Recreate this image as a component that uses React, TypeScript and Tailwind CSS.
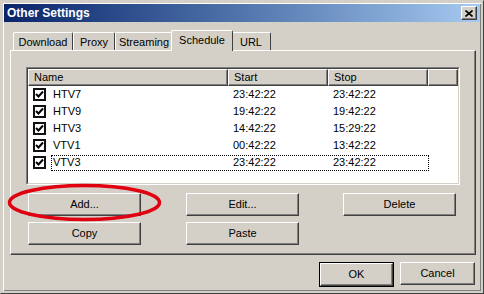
import React from 'react';

const rows = [
  { name: 'HTV7', start: '23:42:22', stop: '23:42:22' },
  { name: 'HTV9', start: '19:42:22', stop: '19:42:22' },
  { name: 'HTV3', start: '14:42:22', stop: '15:29:22' },
  { name: 'VTV1', start: '00:42:22', stop: '13:42:22' },
  { name: 'VTV3', start: '23:42:22', stop: '23:42:22' },
];

const raised =
  'border border-t-white border-l-white border-r-[#404040] border-b-[#404040] shadow-[inset_-1px_-1px_0_#808080]';

function Button({ label, className = '' }: { label: string; className?: string }) {
  return (
    <div className={`flex h-[23px] items-center justify-center bg-[#d4d0c8] ${raised} ${className}`}>
      {label}
    </div>
  );
}

function CheckBox() {
  return (
    <div className="flex h-[13px] w-[13px] items-center justify-center border-2 border-[#111] bg-white">
      <svg width="9" height="9" viewBox="0 0 9 9">
        <path d="M1 4 L3.5 6.5 L8 1.5" stroke="#000" strokeWidth="2" fill="none" />
      </svg>
    </div>
  );
}

function Tab({ label, w, active }: { label: string; w: number; active?: boolean }) {
  return (
    <div
      style={{ width: w }}
      className={`flex items-center justify-center rounded-t-[2px] border-t border-l border-r border-t-white border-l-white border-r-[#404040] bg-[#d4d0c8] ${
        active ? 'relative z-10 -mx-[2px] h-[21px] pb-[2px] -mb-px' : 'h-[18px] pt-[1px]'
      }`}
    >
      {label}
    </div>
  );
}

export default function App() {
  return (
    <div
      className="relative h-[294px] w-[484px] overflow-hidden border border-t-[#d4d0c8] border-l-[#d4d0c8] border-r-[#404040] border-b-[#404040] bg-[#d4d0c8] p-[2px] text-[11px] text-black"
      style={{ fontFamily: '"Liberation Sans", Arial, sans-serif' }}
    >
      <div className="h-full shadow-[inset_1px_1px_0_#fff,inset_-1px_-1px_0_#808080] px-[1px] pt-[1px]">
        {/* title bar */}
        <div className="flex h-[18px] items-center justify-between bg-gradient-to-r from-[#0a246a] to-[#a6caf0] pl-[3px] pr-[3px]">
          <span className="text-[12px] font-bold text-white">Other Settings</span>
          <div className={`flex h-[14px] w-[16px] items-center justify-center bg-[#d4d0c8] ${raised}`}>
            <svg width="8" height="7" viewBox="0 0 8 7">
              <path d="M0.5 0.5 L7.5 6.5 M7.5 0.5 L0.5 6.5" stroke="#000" strokeWidth="1.6" />
            </svg>
          </div>
        </div>

        {/* tabs */}
        <div className="ml-[9px] mt-[8px] flex items-end">
          <Tab label="Download" w={60} />
          <Tab label="Proxy" w={42} />
          <Tab label="Streaming" w={58} />
          <Tab label="Schedule" w={62} active />
          <Tab label="URL" w={40} />
        </div>

        {/* panel */}
        <div className="ml-[6px] h-[205px] w-[466px] border border-t-white border-l-white border-r-[#404040] border-b-[#404040] shadow-[inset_-1px_-1px_0_#808080] pl-[15px] pt-[16px]">
          {/* list view */}
          <div className="h-[118px] w-[434px] border border-t-[#808080] border-l-[#808080] border-r-white border-b-white">
            <div className="h-full w-full border border-t-[#404040] border-l-[#404040] border-r-[#d4d0c8] border-b-[#d4d0c8] bg-white">
              <div className="flex h-[17px]">
                {[
                  ['Name', 'w-[200px]'],
                  ['Start', 'w-[100px]'],
                  ['Stop', 'w-[100px]'],
                  ['', 'w-[30px]'],
                ].map(([t, w], i) => (
                  <div
                    key={i}
                    className={`${w} flex items-center bg-[#d4d0c8] pl-[5px] border border-t-white border-l-white border-r-[#404040] border-b-[#404040] shadow-[inset_-1px_-1px_0_#808080]`}
                  >
                    {t}
                  </div>
                ))}
              </div>
              {rows.map((r, i) => (
                <div key={r.name} className="flex h-[17px] items-center">
                  <div className="ml-[5px] mr-[5px]">
                    <CheckBox />
                  </div>
                  <div
                    className={`flex h-[16px] items-center ${
                      i === 4 ? 'border border-dotted border-black' : 'border border-transparent'
                    }`}
                  >
                    <span className="w-[181px] pl-[1px]">{r.name}</span>
                    <span className="w-[100px]">{r.start}</span>
                    <span className="w-[95px]">{r.stop}</span>
                  </div>
                </div>
              ))}
            </div>
          </div>

          {/* buttons */}
          <div className="mt-[8px] flex">
            <Button label="Add..." className="ml-[2px] w-[113px]" />
            <Button label="Edit..." className="ml-[45px] w-[113px]" />
            <Button label="Delete" className="ml-[44px] w-[113px]" />
          </div>
          <div className="mt-[6px] flex">
            <Button label="Copy" className="ml-[2px] w-[113px]" />
            <Button label="Paste" className="ml-[45px] w-[113px]" />
          </div>
        </div>

        {/* dialog buttons */}
        <div className="mt-[7px] flex justify-end pr-[5px]">
          <div className="border border-black">
            <Button label="OK" className="w-[73px] h-[21px]" />
          </div>
          <Button label="Cancel" className="ml-[6px] w-[75px]" />
        </div>
      </div>

      {/* red highlight ellipse */}
      <svg className="pointer-events-none absolute left-[6px] top-[182px]" width="155" height="40">
        <ellipse cx="77.5" cy="19.5" rx="75" ry="17" stroke="#e00010" strokeWidth="3.5" fill="none" />
      </svg>
    </div>
  );
}
